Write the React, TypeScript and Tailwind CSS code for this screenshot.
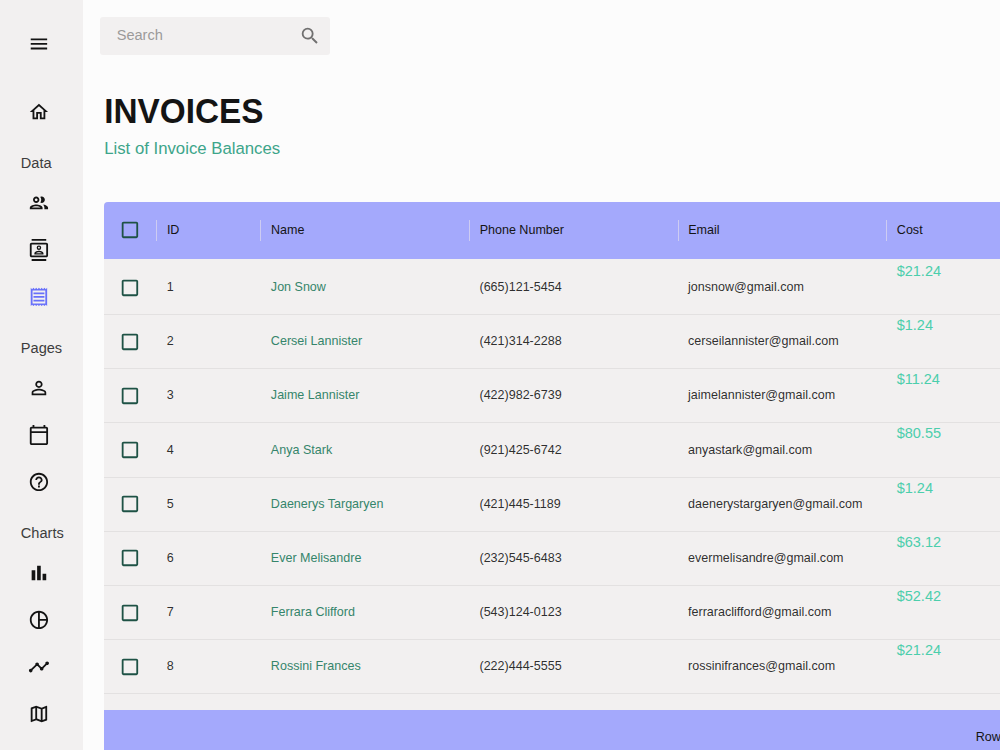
import {
  MdCheckBoxOutlineBlank,
  MdMenu,
  MdOutlineBarChart,
  MdOutlineCalendarToday,
  MdOutlineContacts,
  MdOutlineHelpOutline,
  MdOutlineHome,
  MdOutlineMap,
  MdOutlinePeople,
  MdOutlinePersonOutline,
  MdOutlinePieChartOutline,
  MdOutlineReceipt,
  MdSearch,
  MdTimeline,
} from "react-icons/md";
import type { IconType } from "react-icons";

const menuGroups: { title: string; items: { icon: IconType; label: string }[] }[] = [
  {
    title: "Data",
    items: [
      { icon: MdOutlinePeople, label: "Manage Team" },
      { icon: MdOutlineContacts, label: "Contacts Information" },
      { icon: MdOutlineReceipt, label: "Invoices Balances" },
    ],
  },
  {
    title: "Pages",
    items: [
      { icon: MdOutlinePersonOutline, label: "Profile Form" },
      { icon: MdOutlineCalendarToday, label: "Calendar" },
      { icon: MdOutlineHelpOutline, label: "FAQ Page" },
    ],
  },
  {
    title: "Charts",
    items: [
      { icon: MdOutlineBarChart, label: "Bar Chart" },
      { icon: MdOutlinePieChartOutline, label: "Pie Chart" },
      { icon: MdTimeline, label: "Line Chart" },
      { icon: MdOutlineMap, label: "Geography Chart" },
    ],
  },
];

const invoices = [
  { id: 1, name: "Jon Snow", phone: "(665)121-5454", email: "jonsnow@gmail.com", cost: "21.24" },
  { id: 2, name: "Cersei Lannister", phone: "(421)314-2288", email: "cerseilannister@gmail.com", cost: "1.24" },
  { id: 3, name: "Jaime Lannister", phone: "(422)982-6739", email: "jaimelannister@gmail.com", cost: "11.24" },
  { id: 4, name: "Anya Stark", phone: "(921)425-6742", email: "anyastark@gmail.com", cost: "80.55" },
  { id: 5, name: "Daenerys Targaryen", phone: "(421)445-1189", email: "daenerystargaryen@gmail.com", cost: "1.24" },
  { id: 6, name: "Ever Melisandre", phone: "(232)545-6483", email: "evermelisandre@gmail.com", cost: "63.12" },
  { id: 7, name: "Ferrara Clifford", phone: "(543)124-0123", email: "ferraraclifford@gmail.com", cost: "52.42" },
  { id: 8, name: "Rossini Frances", phone: "(222)444-5555", email: "rossinifrances@gmail.com", cost: "21.24" },
];

const columns = ["ID", "Name", "Phone Number", "Email", "Cost"];

const gridColumns =
  "grid grid-cols-[52.1px_104.2px_208.6px_208.6px_208.6px_1fr]";

function Sidebar({ selected }: { selected: string }) {
  return (
    <aside className="w-[83.3px] shrink-0 bg-[#f2f0f0] text-[#141414]">
      <button className="mt-[33px] ml-[28px] block" aria-label="Menu">
        <MdMenu size={21.875} />
      </button>
      <nav className="mt-[46px]">
        <a className="ml-[28px] flex h-[22px] items-center" aria-label="Dashboard">
          <MdOutlineHome size={21.875} />
        </a>
        {menuGroups.map((group) => (
          <div key={group.title}>
            <h6 className="mt-[29.2px] mb-[5.4px] ml-[20.8px] h-[22.2px] text-[14.58px] leading-[22.2px] text-[#3d3d3d]">
              {group.title}
            </h6>
            {group.items.map((item) => (
              <a
                key={item.label}
                aria-label={item.label}
                className={`flex h-[46.875px] items-center pl-[28px] ${
                  item.label === selected ? "text-[#6870fa]" : ""
                }`}
              >
                <item.icon size={21.875} />
              </a>
            ))}
            <div className="-mb-[12.5px]" />
          </div>
        ))}
      </nav>
    </aside>
  );
}

function Checkbox() {
  return (
    <span className="flex items-center justify-center text-[#1e5245]">
      <MdCheckBoxOutlineBlank size={21.875} />
    </span>
  );
}

function InvoiceTable() {
  return (
    <div className="mt-[41px] ml-[20.9px] h-[564px] w-[1110px] overflow-hidden rounded-t-[4px] bg-[#f2f0f0] text-[12.54px] text-[#141414]/90">
      <div className={`${gridColumns} h-[57.6px] bg-[#a4a9fc]`}>
        <div className="flex items-center justify-center pb-[1.2px]">
          <Checkbox />
        </div>
        {columns.map((column) => (
          <div key={column} className="flex items-center">
            <span className="h-[21px] w-px bg-[#cdccf2]" />
            <span className="pl-[9.6px] text-[#141414]">{column}</span>
          </div>
        ))}
      </div>
      <div className="h-[451px] pt-[1.7px]">
        {invoices.map((invoice) => (
          <div
            key={invoice.id}
            className={`${gridColumns} h-[54.17px] items-center border-b border-[#e3e1e1]`}
          >
            <Checkbox />
            <span className="pl-[10.4px]">{invoice.id}</span>
            <span className="pl-[10.4px] text-[#35856b]">{invoice.name}</span>
            <span className="pl-[10.4px]">{invoice.phone}</span>
            <span className="pl-[10.4px]">{invoice.email}</span>
            <span className="self-start pl-[10.4px] text-[14.5px] leading-[21.9px] text-[#4cceac]">
              ${invoice.cost}
            </span>
          </div>
        ))}
      </div>
      <div className="flex h-[54px] items-center bg-[#a4a9fc] pl-[871.5px] whitespace-nowrap text-[#141414]">
        Rows per page:
      </div>
    </div>
  );
}

export default function App() {
  return (
    <div className="flex h-screen w-screen overflow-hidden bg-[#fcfcfc] font-['Liberation_Sans',Arial,sans-serif]">
      <Sidebar selected="Invoices Balances" />
      <main className="min-w-0 flex-1 overflow-hidden">
        <div className="mt-[16.7px] ml-[16.7px] flex h-[38px] w-[230px] items-center rounded-[3px] bg-[#f2f0f0]">
          <input
            className="ml-[16.7px] w-[163px] bg-transparent text-[14.58px] outline-none placeholder:text-[#9b9a9a]"
            placeholder="Search"
          />
          <button className="ml-[19.5px] text-[#717070]" aria-label="Search">
            <MdSearch size={21.875} />
          </button>
        </div>
        <h2 className="mt-[36.6px] ml-[20.9px] scale-y-[1.06] text-[33.33px] leading-[40px] font-bold text-[#141414]">
          INVOICES
        </h2>
        <h5 className="mt-[5.4px] ml-[20.9px] text-[16.75px] leading-[24px] text-[#3da58a]">
          List of Invoice Balances
        </h5>
        <InvoiceTable />
      </main>
    </div>
  );
}
